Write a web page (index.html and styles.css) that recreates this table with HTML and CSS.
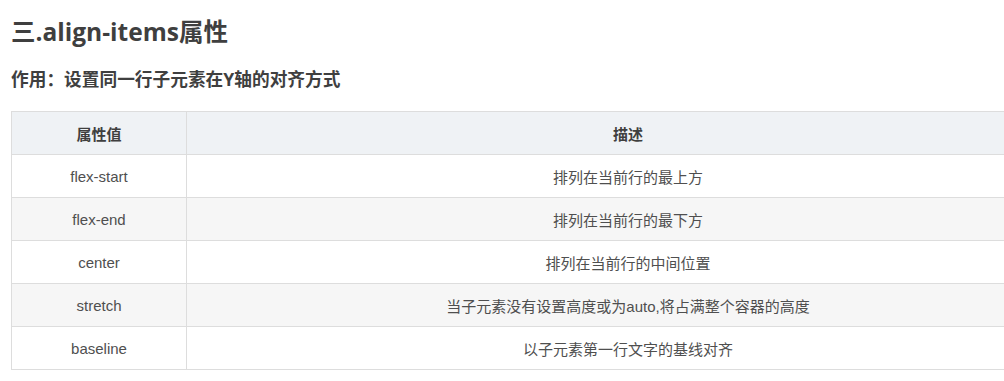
FILE: index.html
```html
<!DOCTYPE html>
<html lang="zh">
<head>
<meta charset="utf-8">
<link rel="stylesheet" href="styles.css">
</head>
<body>
<div class="page">
  <h2 class="title">三.align-items属性</h2>
  <h4 class="subtitle">作用：设置同一行子元素在Y轴的对齐方式</h4>
  <table class="props">
    <thead>
      <tr><th class="col-name">属性值</th><th>描述</th></tr>
    </thead>
    <tbody>
      <tr><td>flex-start</td><td>排列在当前行的最上方</td></tr>
      <tr><td>flex-end</td><td>排列在当前行的最下方</td></tr>
      <tr><td>center</td><td>排列在当前行的中间位置</td></tr>
      <tr><td>stretch</td><td>当子元素没有设置高度或为auto,将占满整个容器的高度</td></tr>
      <tr><td>baseline</td><td>以子元素第一行文字的基线对齐</td></tr>
    </tbody>
  </table>
</div>
</body>
</html>
```

FILE: styles.css
```css
html, body {
  margin: 0;
  padding: 0;
  background: #fff;
  overflow: hidden;
}
body {
  font-family: "Liberation Sans", "Noto Sans CJK SC", sans-serif;
  color: #4d4d4d;
}
.page {
  padding: 0 0 0 11px;
  width: 1100px;
}
.title {
  font-family: "Open Sans", "Noto Sans CJK SC", sans-serif;
  font-size: 24.5px;
  font-weight: 700;
  color: #3f3f3f;
  margin: 0;
  padding-top: 14px;
  line-height: 36px;
}
.subtitle {
  font-family: "Open Sans", "Noto Sans CJK SC", sans-serif;
  font-size: 17.7px;
  font-weight: 700;
  color: #3f3f3f;
  margin: 0;
  padding-top: 16px;
  line-height: 26px;
}
.props {
  margin-top: 19px;
  border-collapse: collapse;
  width: 1059px;
  font-size: 15px;
}
.props th, .props td {
  border: 1px solid #dddddd;
  height: 43px;
  padding: 0 8px;
  box-sizing: border-box;
  text-align: center;
  vertical-align: middle;
}
.props th {
  background: #eff2f5;
  color: #3f3f3f;
  font-weight: 700;
}
.props .col-name {
  width: 175px;
}
.props td {
  color: #4f4f4f;
}
.props tbody tr:nth-child(even) td {
  background: #f6f6f6;
}
```
